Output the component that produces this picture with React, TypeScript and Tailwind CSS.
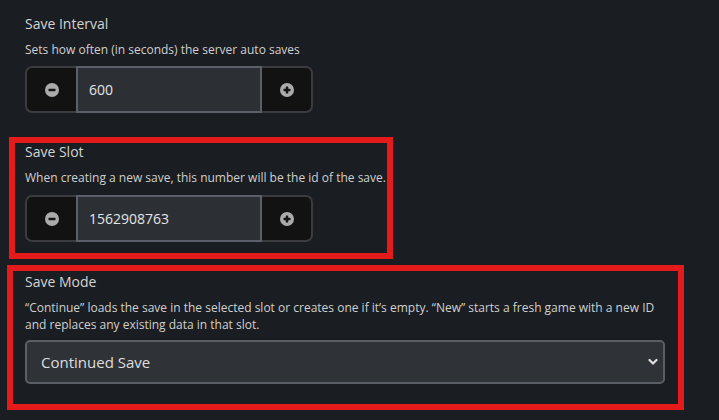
import React from "react";

function MinusIcon() {
  return (
    <svg width="14" height="14" viewBox="0 0 14 14">
      <circle cx="7" cy="7" r="7" fill="#ababab" />
      <rect x="3.5" y="5.8" width="7" height="2.4" rx="0.6" fill="#141414" />
    </svg>
  );
}

function PlusIcon() {
  return (
    <svg width="14" height="14" viewBox="0 0 14 14">
      <circle cx="7" cy="7" r="7" fill="#ababab" />
      <rect x="3.5" y="5.8" width="7" height="2.4" rx="0.6" fill="#141414" />
      <rect x="5.8" y="3.5" width="2.4" height="7" rx="0.6" fill="#141414" />
    </svg>
  );
}

function Stepper({ value }: { value: string }) {
  return (
    <div className="flex h-[47px] w-[288px]">
      <div className="flex w-[51px] items-center justify-center rounded-l-[7px] border-2 border-r-0 border-[#3a3c3f] bg-[#121212]">
        <MinusIcon />
      </div>
      <div className="flex w-[186px] items-center border-2 border-[#5b6068] bg-[#2c3035] pl-[11px] text-[14px] text-[#e4e4e4]">
        {value}
      </div>
      <div className="flex w-[51px] items-center justify-center rounded-r-[7px] border-2 border-l-0 border-[#3a3c3f] bg-[#121212]">
        <PlusIcon />
      </div>
    </div>
  );
}

export default function App() {
  return (
    <div className="h-[420px] w-[719px] overflow-hidden bg-[#1a1d21] pl-[25px] pt-[14px] font-['Open_Sans',sans-serif]">
      <div className="relative">
        <div className="text-[14px] leading-[20px] text-[#d4d4d4]">Save Interval</div>
        <div className="mt-[7px] text-[12px] leading-[17px] text-[#d0d0d0]">
          Sets how often (in seconds) the server auto saves
        </div>
        <div className="mt-[8px]">
          <Stepper value="600" />
        </div>
      </div>

      <div className="relative mt-[29px]">
        <div className="text-[14px] leading-[20px] text-[#d4d4d4]">Save Slot</div>
        <div className="mt-[7px] text-[12px] leading-[17px] text-[#d0d0d0]">
          When creating a new save, this number will be the id of the save.
        </div>
        <div className="mt-[9px]">
          <Stepper value="1562908763" />
        </div>
        <div className="pointer-events-none absolute left-[-16px] top-[-5px] h-[122px] w-[384px] border-[6px] border-[#e51b1b]" />
      </div>

      <div className="relative mt-[30px]">
        <div className="text-[14px] leading-[20px] text-[#d4d4d4]">Save Mode</div>
        <div className="mt-[7px] w-[640px] text-[12px] leading-[17px] text-[#d0d0d0]">
          “Continue” loads the save in the selected slot or creates one if it’s empty. “New” starts a fresh game with a new ID and replaces any existing data in that slot.
        </div>
        <div className="mt-[7px] flex h-[44px] w-[640px] items-center justify-between rounded-[5px] border-2 border-[#5a5f66] bg-[#2f3237] pl-[14px] pr-[5px] text-[15px] text-[#dedede]">
          <span>Continued Save</span>
          <svg width="10" height="8" viewBox="0 0 10 8">
            <polyline points="1.5,2 5,5.5 8.5,2" fill="none" stroke="#e0e0e0" strokeWidth="2.2" strokeLinecap="round" strokeLinejoin="round" />
          </svg>
        </div>
        <div className="pointer-events-none absolute left-[-18px] top-[-7px] h-[145px] w-[677px] border-[6px] border-[#e51b1b]" />
      </div>
    </div>
  );
}
